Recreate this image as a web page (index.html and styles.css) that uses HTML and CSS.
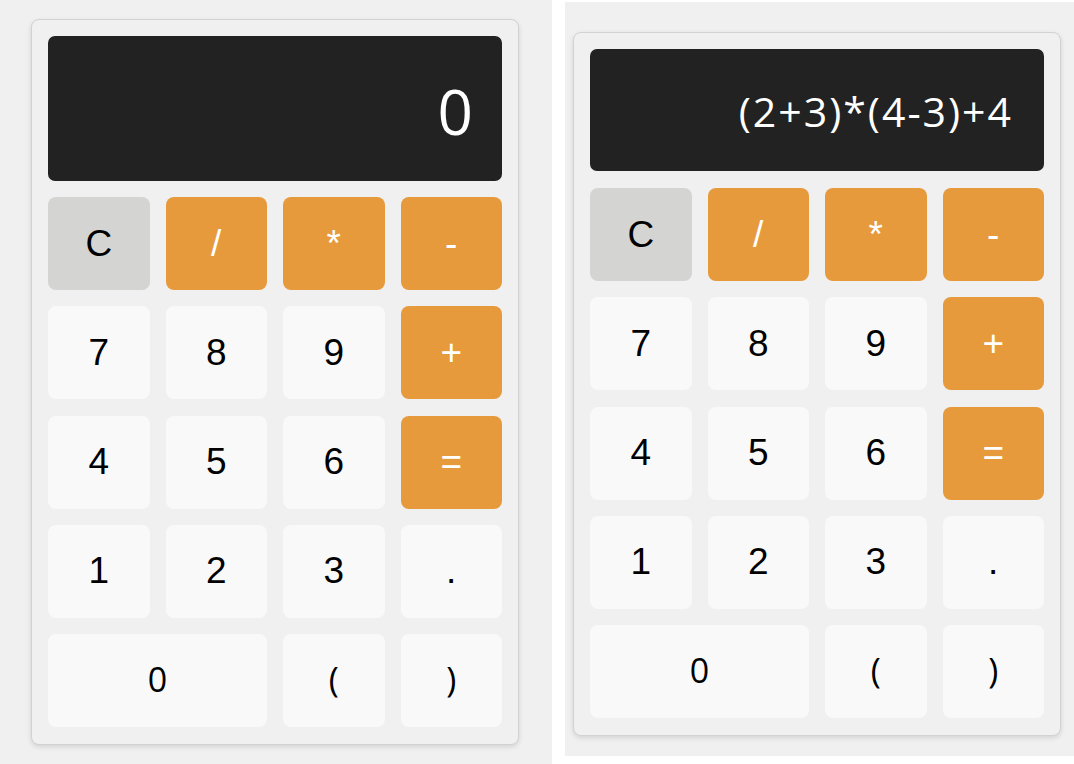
FILE: index.html
```html
<!DOCTYPE html>
<html lang="en">
<head>
    <meta charset="UTF-8">
    <meta name="viewport" content="width=device-width, initial-scale=1.0">
    <title>Calculator</title>
    <link rel="stylesheet" href="styles.css">
</head>
<body>
    <div class="page">
        <!-- Initial state -->
        <div class="shot shot-left">
            <div class="calculator">
                <div class="display">0</div>
                <div class="keys">
                    <button class="key clear">C</button>
                    <button class="key op">/</button>
                    <button class="key op">*</button>
                    <button class="key op">-</button>
                    <button class="key">7</button>
                    <button class="key">8</button>
                    <button class="key">9</button>
                    <button class="key op">+</button>
                    <button class="key">4</button>
                    <button class="key">5</button>
                    <button class="key">6</button>
                    <button class="key op">=</button>
                    <button class="key">1</button>
                    <button class="key">2</button>
                    <button class="key">3</button>
                    <button class="key">.</button>
                    <button class="key alt zero">0</button>
                    <button class="key alt">(</button>
                    <button class="key alt">)</button>
                </div>
            </div>
        </div>

        <div class="spacer"></div>

        <!-- With an expression typed in -->
        <div class="shot shot-right">
            <div class="calculator">
                <div class="display long">(2+3)*(4-3)+4</div>
                <div class="keys">
                    <button class="key clear">C</button>
                    <button class="key op">/</button>
                    <button class="key op">*</button>
                    <button class="key op">-</button>
                    <button class="key">7</button>
                    <button class="key">8</button>
                    <button class="key">9</button>
                    <button class="key op">+</button>
                    <button class="key">4</button>
                    <button class="key">5</button>
                    <button class="key">6</button>
                    <button class="key op">=</button>
                    <button class="key">1</button>
                    <button class="key">2</button>
                    <button class="key">3</button>
                    <button class="key">.</button>
                    <button class="key alt zero">0</button>
                    <button class="key alt">(</button>
                    <button class="key alt">)</button>
                </div>
            </div>
        </div>
    </div>
</body>
</html>
```

FILE: styles.css
```css
body {
    margin: 0;
    background: #fff;
    font-family: 'Liberation Sans', Arial, sans-serif;
}
.page {
    display: flex;
    align-items: flex-start;
}
.shot {
    background-color: #f0f0f0;
}
.shot-left {
    width: 552px;
    height: 764px;
    padding: 19px 0 0 31px;
    box-sizing: border-box;
}
.spacer {
    width: 13px;
}
.shot-right {
    width: 509px;
    height: 754px;
    margin-top: 2px;
    padding: 30px 0 0 8px;
    box-sizing: border-box;
}
.calculator {
    width: 488px;
    box-sizing: border-box;
    padding: 16px 16px 17px;
    border: 1px solid #d2d2d2;
    border-radius: 8px;
    background: #f0f0f0;
    box-shadow: 0 2px 5px rgba(0,0,0,0.12);
}
.display {
    display: flex;
    align-items: center;
    justify-content: flex-end;
    height: 145px;
    padding: 4px 29px 0;
    box-sizing: border-box;
    background-color: #222;
    color: #fff;
    border-radius: 7px;
    font-family: 'Open Sans', sans-serif;
    font-size: 62px;
    margin-bottom: 16px;
}
.display.long {
    height: 122px;
    padding-top: 2px;
    padding-right: 31px;
    font-size: 41px;
    letter-spacing: 2px;
    margin-bottom: 17px;
}
.keys {
    display: grid;
    grid-template-columns: repeat(4, 1fr);
    grid-auto-rows: 93px;
    gap: 16.3px 16px;
}
.key {
    border: none;
    border-radius: 8px;
    background-color: #f9f9f9;
    color: #000;
    font-family: 'Liberation Sans', Arial, sans-serif;
    font-size: 37px;
    padding: 0;
    cursor: pointer;
}
.key.alt {
    font-family: 'Open Sans', sans-serif;
    font-size: 34px;
    padding-bottom: 4px;
}
.key.zero {
    grid-column: span 2;
}
.key.clear {
    background-color: #d4d4d2;
}
.key.op {
    background-color: #e69a3b;
    color: #fff;
}
```
